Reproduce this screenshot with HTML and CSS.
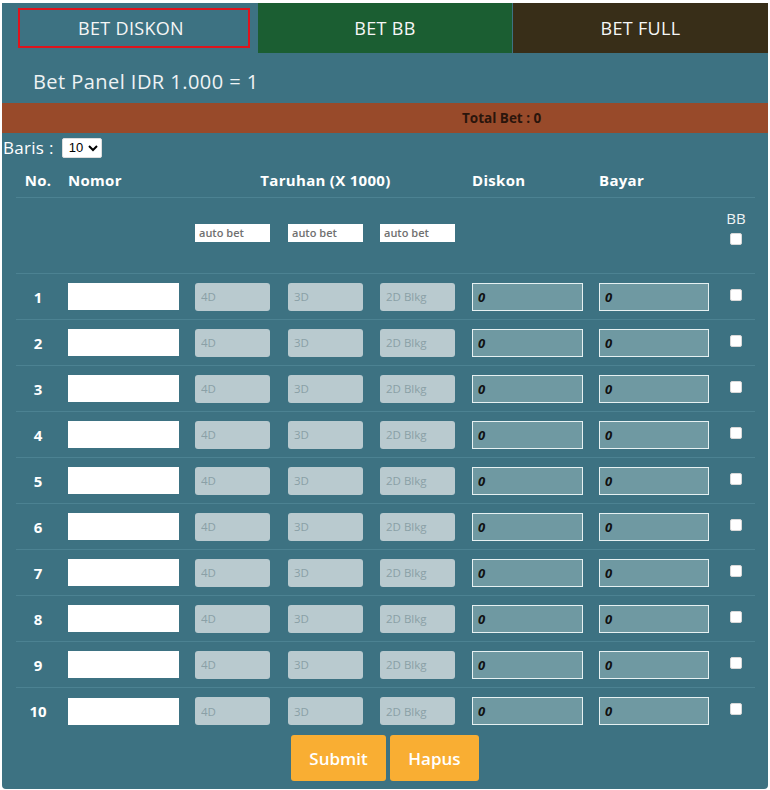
FILE: index.html
```html
<!DOCTYPE html>
<html lang="id">
<head>
<meta charset="utf-8">
<title>Bet Panel</title>
<link rel="stylesheet" href="styles.css">
</head>
<body>
<div class="panel">
  <div class="tabs">
    <div class="tab tab-diskon"><span class="tab-label">BET DISKON</span></div>
    <div class="tab tab-bb"><span class="tab-label">BET BB</span></div>
    <div class="tab tab-full"><span class="tab-label">BET FULL</span></div>
  </div>
  <h2 class="title">Bet Panel IDR 1.000 = 1</h2>
  <div class="total">Total Bet : 0</div>
  <div class="baris">Baris : <select class="baris-select"><option>10</option></select></div>
  <div class="table">
    <div class="row head">
      <div class="c center">No.</div>
      <div class="c">Nomor</div>
      <div class="c span3 center">Taruhan (X 1000)</div>
      <div class="c">Diskon</div>
      <div class="c">Bayar</div>
      <div class="c"></div>
    </div>
    <div class="row auto">
      <div class="c"></div>
      <div class="c"></div>
      <div class="c"><input class="in-auto" placeholder="auto bet"></div>
      <div class="c"><input class="in-auto" placeholder="auto bet"></div>
      <div class="c"><input class="in-auto" placeholder="auto bet"></div>
      <div class="c"></div>
      <div class="c"></div>
      <div class="c bbcell"><span class="bb-label">BB</span><input type="checkbox" class="chk"></div>
    </div>
    <div class="row data"><div class="c num">1</div><div class="c"><input class="in-nomor"></div><div class="c"><input class="in-bet" placeholder="4D"></div><div class="c"><input class="in-bet" placeholder="3D"></div><div class="c"><input class="in-bet" placeholder="2D Blkg"></div><div class="c"><input class="in-calc" value="0"></div><div class="c"><input class="in-calc" value="0"></div><div class="c chkcell"><input type="checkbox" class="chk"></div></div>
    <div class="row data"><div class="c num">2</div><div class="c"><input class="in-nomor"></div><div class="c"><input class="in-bet" placeholder="4D"></div><div class="c"><input class="in-bet" placeholder="3D"></div><div class="c"><input class="in-bet" placeholder="2D Blkg"></div><div class="c"><input class="in-calc" value="0"></div><div class="c"><input class="in-calc" value="0"></div><div class="c chkcell"><input type="checkbox" class="chk"></div></div>
    <div class="row data"><div class="c num">3</div><div class="c"><input class="in-nomor"></div><div class="c"><input class="in-bet" placeholder="4D"></div><div class="c"><input class="in-bet" placeholder="3D"></div><div class="c"><input class="in-bet" placeholder="2D Blkg"></div><div class="c"><input class="in-calc" value="0"></div><div class="c"><input class="in-calc" value="0"></div><div class="c chkcell"><input type="checkbox" class="chk"></div></div>
    <div class="row data"><div class="c num">4</div><div class="c"><input class="in-nomor"></div><div class="c"><input class="in-bet" placeholder="4D"></div><div class="c"><input class="in-bet" placeholder="3D"></div><div class="c"><input class="in-bet" placeholder="2D Blkg"></div><div class="c"><input class="in-calc" value="0"></div><div class="c"><input class="in-calc" value="0"></div><div class="c chkcell"><input type="checkbox" class="chk"></div></div>
    <div class="row data"><div class="c num">5</div><div class="c"><input class="in-nomor"></div><div class="c"><input class="in-bet" placeholder="4D"></div><div class="c"><input class="in-bet" placeholder="3D"></div><div class="c"><input class="in-bet" placeholder="2D Blkg"></div><div class="c"><input class="in-calc" value="0"></div><div class="c"><input class="in-calc" value="0"></div><div class="c chkcell"><input type="checkbox" class="chk"></div></div>
    <div class="row data"><div class="c num">6</div><div class="c"><input class="in-nomor"></div><div class="c"><input class="in-bet" placeholder="4D"></div><div class="c"><input class="in-bet" placeholder="3D"></div><div class="c"><input class="in-bet" placeholder="2D Blkg"></div><div class="c"><input class="in-calc" value="0"></div><div class="c"><input class="in-calc" value="0"></div><div class="c chkcell"><input type="checkbox" class="chk"></div></div>
    <div class="row data"><div class="c num">7</div><div class="c"><input class="in-nomor"></div><div class="c"><input class="in-bet" placeholder="4D"></div><div class="c"><input class="in-bet" placeholder="3D"></div><div class="c"><input class="in-bet" placeholder="2D Blkg"></div><div class="c"><input class="in-calc" value="0"></div><div class="c"><input class="in-calc" value="0"></div><div class="c chkcell"><input type="checkbox" class="chk"></div></div>
    <div class="row data"><div class="c num">8</div><div class="c"><input class="in-nomor"></div><div class="c"><input class="in-bet" placeholder="4D"></div><div class="c"><input class="in-bet" placeholder="3D"></div><div class="c"><input class="in-bet" placeholder="2D Blkg"></div><div class="c"><input class="in-calc" value="0"></div><div class="c"><input class="in-calc" value="0"></div><div class="c chkcell"><input type="checkbox" class="chk"></div></div>
    <div class="row data"><div class="c num">9</div><div class="c"><input class="in-nomor"></div><div class="c"><input class="in-bet" placeholder="4D"></div><div class="c"><input class="in-bet" placeholder="3D"></div><div class="c"><input class="in-bet" placeholder="2D Blkg"></div><div class="c"><input class="in-calc" value="0"></div><div class="c"><input class="in-calc" value="0"></div><div class="c chkcell"><input type="checkbox" class="chk"></div></div>
    <div class="row data"><div class="c num">10</div><div class="c"><input class="in-nomor"></div><div class="c"><input class="in-bet" placeholder="4D"></div><div class="c"><input class="in-bet" placeholder="3D"></div><div class="c"><input class="in-bet" placeholder="2D Blkg"></div><div class="c"><input class="in-calc" value="0"></div><div class="c"><input class="in-calc" value="0"></div><div class="c chkcell"><input type="checkbox" class="chk"></div></div>
  </div>
  <div class="actions">
    <button class="btn btn-submit">Submit</button>
    <button class="btn btn-hapus">Hapus</button>
  </div>
</div>
</body>
</html>
```

FILE: styles.css
```css
* { box-sizing: border-box; }
html, body { background: #ffffff; }
body {
  margin: 3px 2px 0 2px;
  font-family: "Open Sans", "Liberation Sans", sans-serif;
  color: #ffffff;
}
.panel {
  width: 766px;
  height: 786px;
  background: #3d7282;
  border-radius: 0 0 4px 4px;
  display: flex;
  flex-direction: column;
}
.tabs {
  display: flex;
  height: 50px;
  gap: 1px;
}
.tab {
  display: flex;
  align-items: center;
  justify-content: center;
  font-size: 18px;
  letter-spacing: 0.3px;
  color: #f6f6f6;
}
.tab-diskon { width: 255px; background: #3d7282; padding: 5px 7px 5px 16px; }
.tab-diskon .tab-label {
  width: 100%;
  height: 100%;
  border: 2px solid #e0141c;
  display: flex;
  align-items: center;
  justify-content: center;
  padding-right: 6px;
}
.tab-bb { width: 254px; background: #1b5e32; }
.tab-full { width: 255px; background: #382e18; }
.title {
  margin: 0;
  height: 50px;
  padding: 6px 0 0 31px;
  display: flex;
  align-items: center;
  font-size: 20px;
  font-weight: normal;
  letter-spacing: 0.45px;
  color: #eef3f4;
}
.total {
  height: 30px;
  background: #984a2a;
  color: #2a150c;
  font-size: 13.5px;
  font-weight: bold;
  display: flex;
  align-items: center;
  padding-left: 460px;
}
.baris {
  height: 29px;
  display: flex;
  align-items: center;
  padding-left: 1px;
  font-size: 17px;
  letter-spacing: 0.3px;
  gap: 8px;
}
.baris-select {
  height: 20px;
  width: 40px;
  font-size: 13px;
  font-family: "Liberation Sans", sans-serif;
  letter-spacing: 0;
  padding: 0 0 0 2px;
  border: 1px solid #dddddd;
  border-radius: 2px;
  background: #ffffff;
  color: #000;
}
.table {
  margin: 0 13px 0 14px;
}
.row {
  display: grid;
  grid-template-columns: 44px 127px 93px 92px 92px 127px 126px 38px;
  border-bottom: 1px solid #4c8292;
  align-items: center;
}
.row:last-child { border-bottom: none; }
.head {
  height: 36px;
  font-size: 15px;
  font-weight: bold;
  letter-spacing: 0.3px;
}
.c { padding: 0 8px; }
.center { text-align: center; }
.span3 { grid-column: span 3; }
.auto { height: 76px; }
.data { height: 46px; }
.num {
  text-align: center;
  font-size: 15px;
  font-weight: bold;
  padding: 0;
}
input { font-family: "Open Sans", "Liberation Sans", sans-serif; }
.in-auto {
  width: 75px;
  height: 18px;
  border: none;
  background: #fff;
  font-size: 11px;
  font-weight: 600;
  padding: 0 4px;
  margin-top: -6px;
  display: block;
}
.in-auto::placeholder { color: #707070; }
.in-nomor {
  width: 111px;
  height: 27px;
  border: none;
  background: #fff;
  display: block;
}
.in-bet {
  width: 75px;
  height: 28px;
  border: none;
  border-radius: 3px;
  background: #b9cacf;
  font-size: 11.5px;
  padding: 0 6px;
  display: block;
}
.in-bet::placeholder { color: #8aa0a6; }
.in-calc {
  width: 111px;
  height: 28px;
  border: 1px solid #e6f1f2;
  background: #6f99a2;
  font-size: 13px;
  font-weight: bold;
  font-style: italic;
  color: #111;
  padding: 0 5px;
  display: block;
}
.data .c:nth-child(7) .in-calc { width: 110px; }
.chkcell, .bbcell {
  display: flex;
  flex-direction: column;
  align-items: center;
  padding: 0;
}
.chkcell { margin-top: -4px; }
.bbcell { margin-top: -18px; gap: 5px; }
.bb-label { font-size: 15px; color: #eef3f4; }
.chk {
  appearance: none;
  -webkit-appearance: none;
  width: 12px;
  height: 12px;
  margin: 0;
  background: #fff;
  border: 1px solid #d8d8d8;
  border-radius: 2px;
}
.actions {
  display: flex;
  justify-content: center;
  gap: 4px;
  padding-top: 1px;
}
.btn {
  height: 46px;
  border: none;
  border-radius: 3px;
  background: #f9ae33;
  color: #fff;
  font-family: "Open Sans", "Liberation Sans", sans-serif;
  font-size: 17px;
  font-weight: 600;
  padding: 0 8px;
}
.btn-submit { width: 95px; }
.btn-hapus { width: 89px; }
```
